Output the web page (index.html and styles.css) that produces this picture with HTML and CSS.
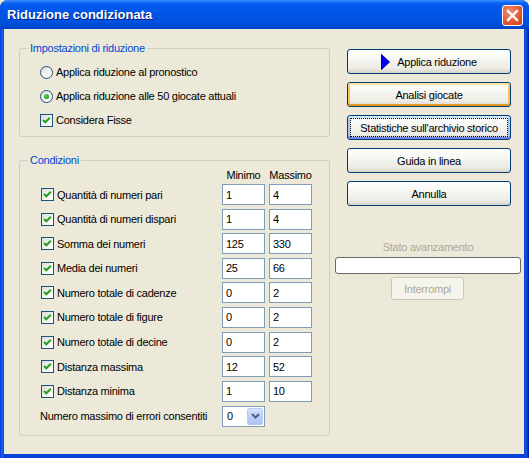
FILE: index.html
```html
<!DOCTYPE html>
<html>
<head>
<meta charset="utf-8">
<link rel="stylesheet" href="styles.css">
</head>
<body>
<div class="window">
  <div class="titlebar">
    <span class="title">Riduzione condizionata</span>
    <span class="close"><svg width="13" height="13" viewBox="0 0 13 13"><path d="M2 2 L11 11 M11 2 L2 11" stroke="#fff" stroke-width="2.4" stroke-linecap="square"/></svg></span>
  </div>
  <div class="client">
    <div class="left">
      <fieldset class="group">
        <legend>Impostazioni di riduzione</legend>
        <div class="group-body settings">
          <div class="opt"><span class="radio"></span><span>Applica riduzione al pronostico</span></div>
          <div class="opt"><span class="radio on"><span class="dot"></span></span><span>Applica riduzione alle 50 giocate attuali</span></div>
          <div class="opt"><span class="check"><svg width="11" height="11" viewBox="0 0 11 11"><polyline points="2,5 4.3,7.3 8.8,2.8" fill="none" stroke="#21A121" stroke-width="2"/></svg></span><span>Considera Fisse</span></div>
        </div>
      </fieldset>
      <fieldset class="group">
        <legend>Condizioni</legend>
        <div class="group-body cond">
          <div class="grid">
            <span></span><span class="hdr">Minimo</span><span class="hdr">Massimo</span>
          </div>
          <div class="rows">
            <div class="grid row"><span class="opt"><span class="check"><svg width="11" height="11" viewBox="0 0 11 11"><polyline points="2,5 4.3,7.3 8.8,2.8" fill="none" stroke="#21A121" stroke-width="2"/></svg></span><span>Quantità di numeri pari</span></span><input class="field" value="1" readonly><input class="field" value="4" readonly></div>
            <div class="grid row"><span class="opt"><span class="check"><svg width="11" height="11" viewBox="0 0 11 11"><polyline points="2,5 4.3,7.3 8.8,2.8" fill="none" stroke="#21A121" stroke-width="2"/></svg></span><span>Quantità di numeri dispari</span></span><input class="field" value="1" readonly><input class="field" value="4" readonly></div>
            <div class="grid row"><span class="opt"><span class="check"><svg width="11" height="11" viewBox="0 0 11 11"><polyline points="2,5 4.3,7.3 8.8,2.8" fill="none" stroke="#21A121" stroke-width="2"/></svg></span><span>Somma dei numeri</span></span><input class="field" value="125" readonly><input class="field" value="330" readonly></div>
            <div class="grid row"><span class="opt"><span class="check"><svg width="11" height="11" viewBox="0 0 11 11"><polyline points="2,5 4.3,7.3 8.8,2.8" fill="none" stroke="#21A121" stroke-width="2"/></svg></span><span>Media dei numeri</span></span><input class="field" value="25" readonly><input class="field" value="66" readonly></div>
            <div class="grid row"><span class="opt"><span class="check"><svg width="11" height="11" viewBox="0 0 11 11"><polyline points="2,5 4.3,7.3 8.8,2.8" fill="none" stroke="#21A121" stroke-width="2"/></svg></span><span>Numero totale di cadenze</span></span><input class="field" value="0" readonly><input class="field" value="2" readonly></div>
            <div class="grid row"><span class="opt"><span class="check"><svg width="11" height="11" viewBox="0 0 11 11"><polyline points="2,5 4.3,7.3 8.8,2.8" fill="none" stroke="#21A121" stroke-width="2"/></svg></span><span>Numero totale di figure</span></span><input class="field" value="0" readonly><input class="field" value="2" readonly></div>
            <div class="grid row"><span class="opt"><span class="check"><svg width="11" height="11" viewBox="0 0 11 11"><polyline points="2,5 4.3,7.3 8.8,2.8" fill="none" stroke="#21A121" stroke-width="2"/></svg></span><span>Numero totale di decine</span></span><input class="field" value="0" readonly><input class="field" value="2" readonly></div>
            <div class="grid row"><span class="opt"><span class="check"><svg width="11" height="11" viewBox="0 0 11 11"><polyline points="2,5 4.3,7.3 8.8,2.8" fill="none" stroke="#21A121" stroke-width="2"/></svg></span><span>Distanza massima</span></span><input class="field" value="12" readonly><input class="field" value="52" readonly></div>
            <div class="grid row"><span class="opt"><span class="check"><svg width="11" height="11" viewBox="0 0 11 11"><polyline points="2,5 4.3,7.3 8.8,2.8" fill="none" stroke="#21A121" stroke-width="2"/></svg></span><span>Distanza minima</span></span><input class="field" value="1" readonly><input class="field" value="10" readonly></div>
            <div class="grid row last"><span class="errlabel">Numero massimo di errori consentiti</span>
              <div class="combo"><span class="combo-val">0</span><span class="combo-btn"><svg width="9" height="6" viewBox="0 0 9 6"><polyline points="1,1 4.5,4.5 8,1" fill="none" stroke="#4D6185" stroke-width="2"/></svg></span></div>
            </div>
          </div>
        </div>
      </fieldset>
    </div>
    <div class="right">
      <div class="btn"><svg class="play" width="9" height="16" viewBox="0 0 9 16"><polygon points="0.5,0.5 8.5,8 0.5,15.5" fill="#0000F0" stroke="#0000A0" stroke-width="1"/></svg><span>Applica riduzione</span></div>
      <div class="btn hot">Analisi giocate</div>
      <div class="btn focus">Statistiche sull'archivio storico</div>
      <div class="btn">Guida in linea</div>
      <div class="btn">Annulla</div>
      <div class="status-label">Stato avanzamento</div>
      <div class="progress"></div>
      <div class="btn disabled">Interrompi</div>
    </div>
  </div>
</div>
</body>
</html>
```
FILE: styles.css
```css
html, body {
  margin: 0;
  padding: 0;
  background: #ECE9D8;
}
body {
  font-family: "Liberation Sans", Arial, sans-serif;
  font-size: 11px;
  letter-spacing: -0.25px;
  color: #000;
}
.window {
  width: 529px;
  height: 458px;
  box-sizing: border-box;
  display: flex;
  flex-direction: column;
  background: linear-gradient(to right, #0831D9 0, #166AEE 2px, #0842D8 4px, #0842D8 524px, #1553D9 526px, #001EA0 529px);
  border-radius: 8px 8px 0 0;
  overflow: hidden;
}
.titlebar {
  height: 29px;
  flex: none;
  display: flex;
  align-items: center;
  justify-content: space-between;
  padding: 0 6px 0 7px;
  background: linear-gradient(to bottom, #3D93FF 0, #0A62F2 3px, #0058EE 6px, #0055E5 14px, #0052DE 22px, #0048D0 27px, #0040C0 29px);
}
.title {
  color: #fff;
  font-weight: bold;
  font-size: 13px;
  letter-spacing: 0;
  text-shadow: 1px 1px 0 #0A1883;
  margin-top: -1px;
}
.close {
  width: 21px;
  height: 21px;
  box-sizing: border-box;
  border: 1px solid #fff;
  border-radius: 3px;
  background: radial-gradient(circle at 35% 30%, #F08A6E 0, #E35A36 55%, #C8401E 100%);
  display: flex;
  align-items: center;
  justify-content: center;
  margin-top: 1px;
}
.client {
  flex: 1;
  margin: 0 5px 4px 4px;
  background: #ECE9D8;
  display: flex;
  padding: 13px 3px 0 15px;
  column-gap: 5px;
}
.left {
  width: 311px;
  display: flex;
  flex-direction: column;
  row-gap: 17px;
}
.group {
  margin: 0;
  padding: 0;
  border: 1px solid #D0D0BF;
  border-radius: 3px;
  min-width: 0;
}
.group legend {
  color: #0046D5;
  padding: 0 2px;
  margin-left: 8px;
  line-height: 13px;
}
.group-body.settings {
  padding: 5px 0 4px 20px;
}
.group-body.cond {
  padding: 0 0 8px 21px;
}
.opt {
  display: flex;
  align-items: center;
  height: 24px;
  column-gap: 3px;
  white-space: nowrap;
}
.radio {
  width: 13px;
  height: 13px;
  box-sizing: border-box;
  border: 1px solid #1C5180;
  border-radius: 50%;
  background: linear-gradient(135deg, #DCDCD7 0, #F5F5F2 60%, #FFFFFF 100%);
  display: flex;
  align-items: center;
  justify-content: center;
  flex: none;
}
.dot {
  width: 5px;
  height: 5px;
  border-radius: 50%;
  background: radial-gradient(circle at 40% 40%, #5BD05B 0, #21A121 70%);
}
.check {
  width: 13px;
  height: 13px;
  box-sizing: border-box;
  border: 1px solid #1C5180;
  background: linear-gradient(135deg, #DCDCD7 0, #F5F5F2 60%, #FFFFFF 100%);
  display: flex;
  flex: none;
}
.grid {
  display: grid;
  grid-template-columns: 177px 43px 43px;
  column-gap: 4px;
  align-items: center;
}
.hdr {
  text-align: center;
  line-height: 17px;
}
.rows {
  display: flex;
  flex-direction: column;
  row-gap: 3.6px;
}
.row {
  height: 21px;
}
.row .opt {
  height: 21px;
}
.field {
  width: 43px;
  height: 21px;
  box-sizing: border-box;
  border: 1px solid #7F9DB9;
  background: #fff;
  padding: 0 0 0 3px;
  margin: 0;
  font: inherit;
  letter-spacing: inherit;
  color: #000;
  outline: none;
}
.row.last {
  margin-top: 0.4px;
}
.errlabel {
  margin-left: -1px;
  white-space: nowrap;
}
.combo {
  width: 43px;
  height: 21px;
  box-sizing: border-box;
  border: 1px solid #7F9DB9;
  background: #fff;
  display: flex;
  align-items: stretch;
  justify-content: space-between;
  padding: 1px 1px 1px 4px;
}
.combo-val {
  line-height: 19px;
  margin-top: -1px;
}
.combo-btn {
  width: 16px;
  box-sizing: border-box;
  border: 1px solid #B9CBF3;
  border-radius: 2px;
  background: linear-gradient(to bottom, #D7E3FD 0, #BCCEF8 50%, #B0C4F5 100%);
  display: flex;
  align-items: center;
  justify-content: center;
}
.right {
  width: 186px;
  display: flex;
  flex-direction: column;
  align-items: flex-start;
  padding-top: 7px;
}
.btn {
  position: relative;
  width: 164px;
  height: 25px;
  box-sizing: border-box;
  margin: 0 0 8px 12px;
  border: 1px solid #003C74;
  border-radius: 3px;
  background: linear-gradient(to bottom, #FFFFFF 0, #F6F6F2 40%, #ECEBE4 80%, #D8D4C8 100%);
  display: flex;
  align-items: center;
  justify-content: center;
  column-gap: 7px;
  white-space: nowrap;
}
.btn .play {
  flex: none;
}
.btn.hot {
  box-shadow: inset 0 2px 0 #FFE7A2, inset 0 -2px 0 #E59A1E, inset 2px 0 0 #F9C15A, inset -2px 0 0 #F9C15A;
}
.btn.focus {
  box-shadow: inset 0 2px 0 #CEE7FF, inset 0 -2px 0 #6982EE, inset 2px 0 0 #A9C4F5, inset -2px 0 0 #A9C4F5;
}
.btn.focus::after {
  content: "";
  position: absolute;
  top: 2px;
  left: 2px;
  right: 2px;
  bottom: 2px;
  border: 1px dotted #000;
}
.status-label {
  width: 186px;
  text-align: center;
  color: #ACA899;
  margin-top: 27px;
  line-height: 13px;
}
.progress {
  width: 186px;
  height: 17px;
  box-sizing: border-box;
  margin-top: 3px;
  border: 1px solid #686868;
  border-radius: 3px;
  background: #fff;
}
.btn.disabled {
  width: 73px;
  height: 23px;
  margin: 3px 0 0 56px;
  border-color: #C9C7BA;
  background: #F5F4EA;
  color: #ACA899;
}
```
